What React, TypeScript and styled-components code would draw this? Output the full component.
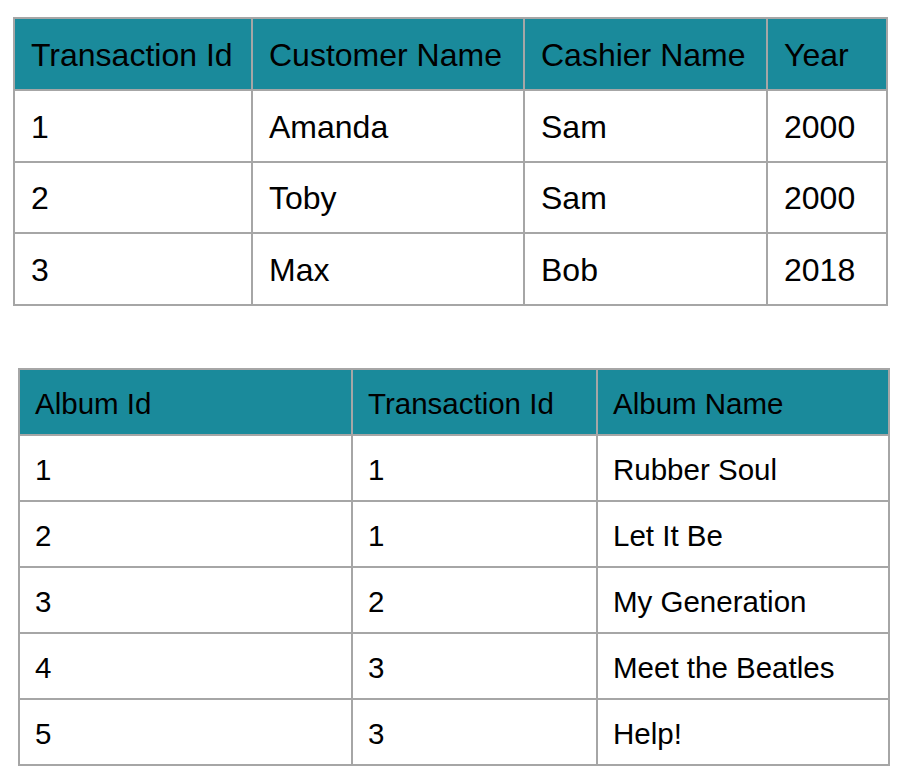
import React from "react";
import styled, { createGlobalStyle } from "styled-components";

const Global = createGlobalStyle`
  html, body { margin: 0; padding: 0; background: #ffffff; }
  body { font-family: "Liberation Sans", Arial, sans-serif; color: #000; }
`;

const Page = styled.div`
  display: flex;
  flex-direction: column;
  align-items: flex-start;
  padding: 17px 0 0 0;
`;

const Grid = styled.div<{
  $cols: string;
  $rows: string;
  $left: number;
  $top: number;
  $size: number;
  $pad: number;
  $padTop: number;
}>`
  display: grid;
  grid-template-columns: ${(p) => p.$cols};
  grid-template-rows: ${(p) => p.$rows};
  margin-left: ${(p) => p.$left}px;
  margin-top: ${(p) => p.$top}px;
  border-top: 2px solid #a6a6a6;
  border-left: 2px solid #a6a6a6;
  font-size: ${(p) => p.$size}px;
  --pad: ${(p) => p.$pad}px;
  --pad-top: ${(p) => p.$padTop}px;
`;

const Cell = styled.div<{ $head?: boolean }>`
  display: flex;
  align-items: center;
  padding-left: var(--pad);
  padding-top: var(--pad-top);
  border-right: 2px solid #a6a6a6;
  border-bottom: 2px solid #a6a6a6;
  background: ${(p) => (p.$head ? "#1a8a9b" : "#ffffff")};
  white-space: nowrap;
  line-height: 1;
`;

type TableProps = {
  head: string[];
  rows: string[][];
  cols: string;
  rowHeights: string;
  left: number;
  top: number;
  size: number;
  pad: number;
  padTop: number;
};

function DataTable({ head, rows, cols, rowHeights, left, top, size, pad, padTop }: TableProps) {
  return (
    <Grid
      $cols={cols}
      $rows={rowHeights}
      $left={left}
      $top={top}
      $size={size}
      $pad={pad}
      $padTop={padTop}
    >
      {head.map((h) => (
        <Cell key={h} $head>
          {h}
        </Cell>
      ))}
      {rows.map((r, i) => r.map((c, j) => <Cell key={`${i}-${j}`}>{c}</Cell>))}
    </Grid>
  );
}

export default function App() {
  return (
    <>
      <Global />
      <Page>
        <DataTable
          head={["Transaction Id", "Customer Name", "Cashier Name", "Year"]}
          rows={[
            ["1", "Amanda", "Sam", "2000"],
            ["2", "Toby", "Sam", "2000"],
            ["3", "Max", "Bob", "2018"],
          ]}
          cols="238px 272px 243px 120px"
          rowHeights="72px 72px 71px 72px"
          left={13}
          top={0}
          size={32}
          pad={16}
          padTop={1}
        />
        <DataTable
          head={["Album Id", "Transaction Id", "Album Name"]}
          rows={[
            ["1", "1", "Rubber Soul"],
            ["2", "1", "Let It Be"],
            ["3", "2", "My Generation"],
            ["4", "3", "Meet the Beatles"],
            ["5", "3", "Help!"],
          ]}
          cols="333px 245px 292px"
          rowHeights="66px 66px 66px 66px 66px 66px"
          left={18}
          top={62}
          size={29.5}
          pad={15}
          padTop={3}
        />
      </Page>
    </>
  );
}
